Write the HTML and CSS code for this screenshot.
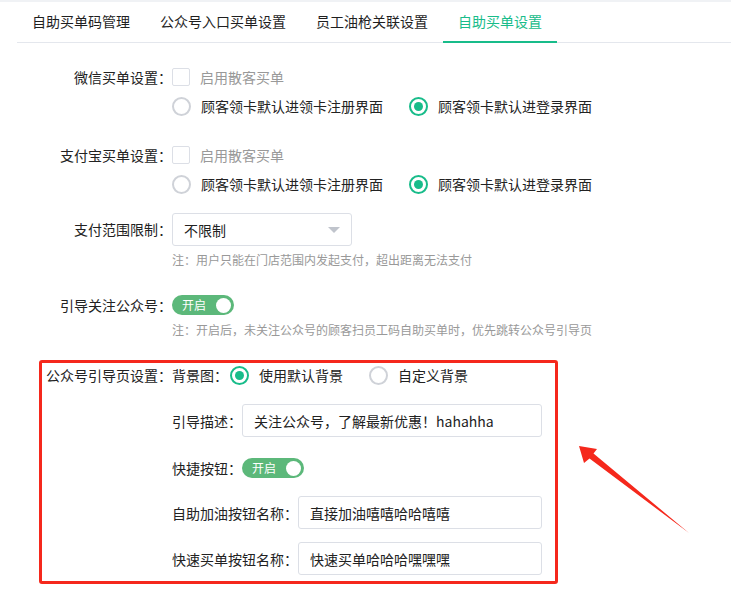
FILE: index.html
```html
<!DOCTYPE html>
<html lang="zh-CN">
<head>
<meta charset="utf-8">
<title>自助买单设置</title>
<link rel="stylesheet" href="styles.css">
</head>
<body>
<div class="page">
  <div class="topstrip"></div>
  <div class="tabs">
    <div class="tab">自助买单码管理</div>
    <div class="tab">公众号入口买单设置</div>
    <div class="tab">员工油枪关联设置</div>
    <div class="tab active">自助买单设置</div>
  </div>

  <div class="form">
    <div class="item">
      <div class="label">微信买单设置：</div>
      <div class="content">
        <div class="line"><span class="checkbox"></span><span class="cb-text">启用散客买单</span></div>
        <div class="line gap9">
          <span class="radio"></span><span class="radio-text">顾客领卡默认进领卡注册界面</span>
          <span class="radio checked"></span><span class="radio-text">顾客领卡默认进登录界面</span>
        </div>
      </div>
    </div>

    <div class="item mt29">
      <div class="label">支付宝买单设置：</div>
      <div class="content">
        <div class="line"><span class="checkbox"></span><span class="cb-text">启用散客买单</span></div>
        <div class="line gap9">
          <span class="radio"></span><span class="radio-text">顾客领卡默认进领卡注册界面</span>
          <span class="radio checked"></span><span class="radio-text">顾客领卡默认进登录界面</span>
        </div>
      </div>
    </div>

    <div class="item mt19">
      <div class="label tall">支付范围限制：</div>
      <div class="content">
        <div class="select"><span>不限制</span><span class="caret"></span></div>
        <div class="note mt6">注：用户只能在门店范围内发起支付，超出距离无法支付</div>
      </div>
    </div>

    <div class="item mt27">
      <div class="label">引导关注公众号：</div>
      <div class="content">
        <div class="line"><span class="switch"><span class="switch-text">开启</span><span class="knob"></span></span></div>
        <div class="note mt7">注：开启后，未关注公众号的顾客扫员工码自助买单时，优先跳转公众号引导页</div>
      </div>
    </div>

    <div class="highlight">
      <div class="hl-label">公众号引导页设置：</div>
      <div class="hl-content">
        <div class="line">
          <span class="sub-label">背景图：</span>
          <span class="radio checked first"></span><span class="radio-text">使用默认背景</span>
          <span class="radio"></span><span class="radio-text">自定义背景</span>
        </div>
        <div class="row mt19">
          <span class="sub-label">引导描述：</span>
          <div class="input wide">关注公众号，了解最新优惠！hahahha</div>
        </div>
        <div class="line mt21">
          <span class="sub-label">快捷按钮：</span>
          <span class="switch"><span class="switch-text">开启</span><span class="knob"></span></span>
        </div>
        <div class="row mt18">
          <span class="sub-label">自助加油按钮名称：</span>
          <div class="input narrow">直接加油嘻嘻哈哈嘻嘻</div>
        </div>
        <div class="row mt13">
          <span class="sub-label">快速买单按钮名称：</span>
          <div class="input narrow">快速买单哈哈哈嘿嘿嘿</div>
        </div>
      </div>
    </div>
  </div>

  <svg class="arrow" width="731" height="602" viewBox="0 0 731 602" aria-hidden="true">
    <polygon points="579,446 597,449 593.5,453.5 689,533 589.5,458.5 584,463" fill="#f5281c"/>
  </svg>
</div>
</body>
</html>
```

FILE: styles.css
```css
* { box-sizing: border-box; }

html, body {
  margin: 0;
  padding: 0;
  background: #ffffff;
}

body {
  font-family: "Noto Sans CJK SC", "Microsoft YaHei", "Liberation Sans", sans-serif;
  font-size: 14px;
  color: #222222;
}

.page {
  position: relative;
  width: 731px;
  height: 602px;
  overflow: hidden;
}

.topstrip {
  height: 2px;
  background: #f0f2f5;
}

.tabs {
  display: flex;
  align-items: flex-end;
  margin-left: 17px;
  height: 41px;
  border-bottom: 1px solid #e4e7ed;
}

.tab {
  padding: 0 15px;
  height: 40px;
  line-height: 38px;
  font-size: 14px;
  color: #1f1f1f;
  white-space: nowrap;
}

.tab.active {
  color: #18bc8a;
  border-bottom: 2px solid #18bc8a;
  margin-bottom: -1px;
  height: 41px;
}

.form {
  padding-left: 17px;
  padding-top: 24px;
}

.item {
  display: flex;
  align-items: flex-start;
}

.label {
  width: 155px;
  flex-shrink: 0;
  text-align: right;
  line-height: 20px;
  white-space: nowrap;
  color: #222222;
}

.label.tall { line-height: 33px; }

.content {
  display: flex;
  flex-direction: column;
}

.line {
  display: flex;
  align-items: center;
  height: 20px;
  white-space: nowrap;
}

.row {
  display: flex;
  align-items: center;
  white-space: nowrap;
}

.gap9 { margin-top: 9px; }
.mt6 { margin-top: 6px; }
.mt7 { margin-top: 7px; }
.mt13 { margin-top: 13px; }
.mt18 { margin-top: 18px; }
.mt19 { margin-top: 19px; }
.mt21 { margin-top: 21px; }
.mt27 { margin-top: 27px; }
.mt29 { margin-top: 29px; }

.checkbox {
  width: 18px;
  height: 18px;
  border: 1px solid #dcdfe6;
  border-radius: 2px;
  background: #fff;
  flex-shrink: 0;
}

.cb-text {
  margin-left: 10px;
  color: #999999;
}

.radio {
  width: 19px;
  height: 19px;
  border: 2px solid #cfd2d8;
  border-radius: 50%;
  flex-shrink: 0;
  display: flex;
  align-items: center;
  justify-content: center;
  background: #fff;
}

.radio.checked {
  border-color: #18bc8a;
}

.radio.checked::after {
  content: "";
  width: 9px;
  height: 9px;
  border-radius: 50%;
  background: #18bc8a;
}

.radio-text {
  margin-left: 10px;
  margin-right: 26px;
  color: #222222;
}

.select {
  width: 180px;
  height: 33px;
  border: 1px solid #dcdfe6;
  border-radius: 3px;
  display: flex;
  align-items: center;
  justify-content: space-between;
  padding: 0 11px 0 11px;
  color: #222222;
}

.caret {
  width: 0;
  height: 0;
  border-left: 6px solid transparent;
  border-right: 6px solid transparent;
  border-top: 6px solid #c0c4cc;
  margin-top: 1px;
}

.note {
  font-size: 12px;
  line-height: 16px;
  color: #999999;
  white-space: nowrap;
}

.switch {
  width: 62px;
  height: 20px;
  border-radius: 10px;
  background: #5cb87a;
  display: flex;
  align-items: center;
  justify-content: space-between;
  padding: 0 3px 0 10px;
  flex-shrink: 0;
}

.switch-text {
  color: #ffffff;
  font-size: 12px;
  line-height: 20px;
}

.knob {
  width: 15px;
  height: 15px;
  border-radius: 50%;
  background: #ffffff;
}

.highlight {
  display: flex;
  align-items: flex-start;
  margin-top: 22px;
  margin-left: 22px;
  width: 519px;
  border: 3px solid #f5281c;
  border-radius: 3px;
  padding: 2px 0 6px 4px;
}

.hl-label {
  line-height: 20px;
  white-space: nowrap;
}

.hl-content {
  display: flex;
  flex-direction: column;
}

.sub-label {
  white-space: nowrap;
}

.radio.first { margin-left: 2px; }

.input {
  height: 33px;
  border: 1px solid #dcdfe6;
  border-radius: 3px;
  display: flex;
  align-items: center;
  padding-left: 11px;
  color: #222222;
  white-space: nowrap;
}

.input.wide { width: 300px; }
.input.narrow { width: 244px; }

.arrow {
  position: absolute;
  left: 0;
  top: 0;
  pointer-events: none;
}
```
